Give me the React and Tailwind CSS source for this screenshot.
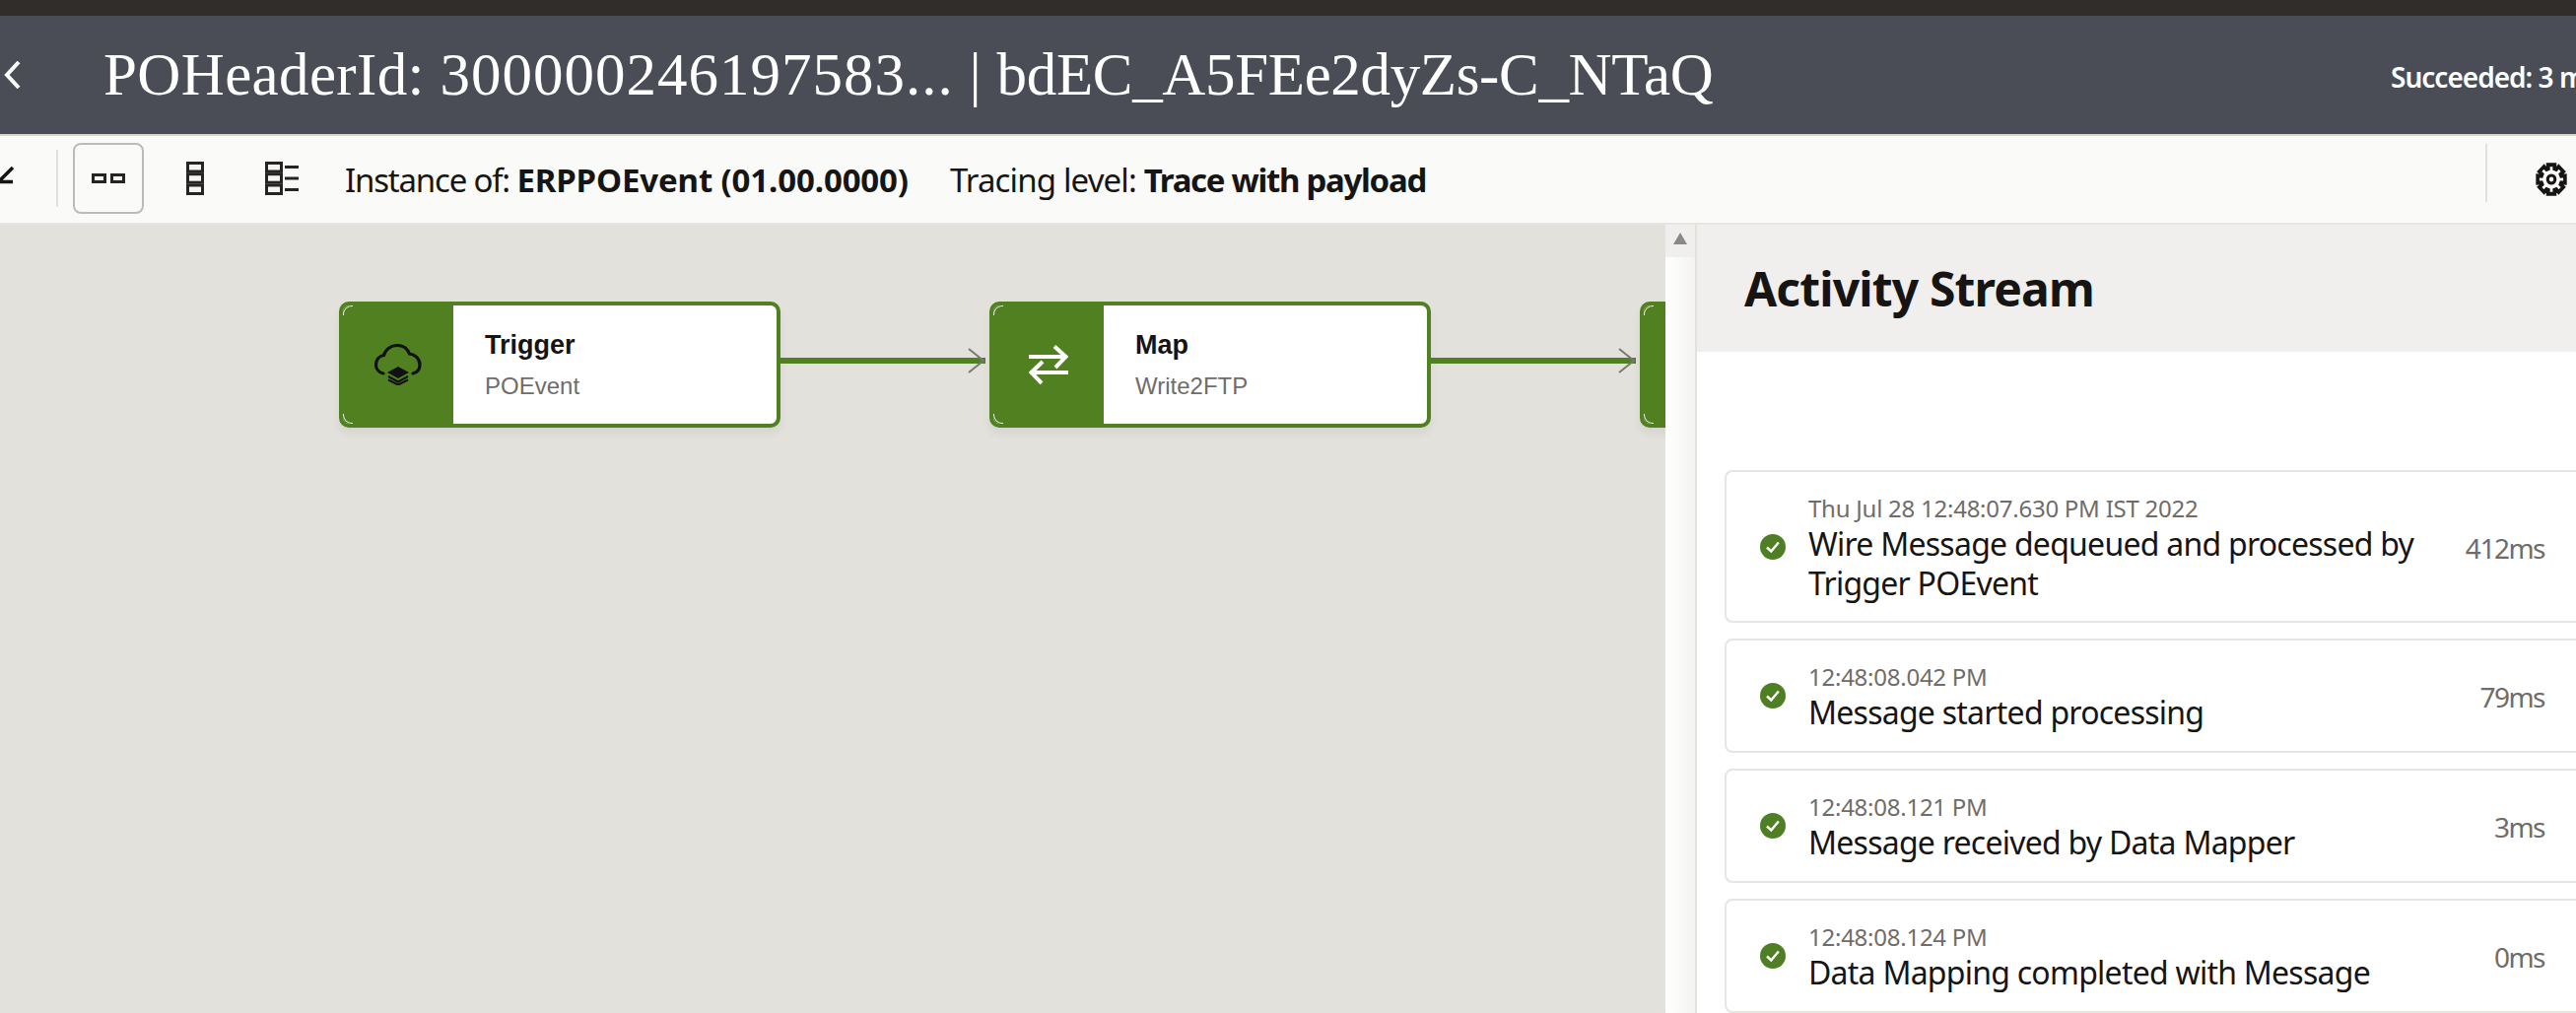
import React from "react";

const sans = "font-['Noto_Sans','Open_Sans',sans-serif]";

function Cloud() {
  return (
    <svg width="48" height="42" viewBox="0 0 48 42" fill="none">
      <path d="M9 30C4 29 1.500 25 1.500 21C1.500 16 5 12 9.500 11.500C11 5.500 17 1.500 23 1.500C29 1.500 33.500 5 35.500 10C41 10.500 46 15 46 21C46 25.500 43.500 29 39 30" stroke="#111" strokeWidth="3.200" strokeLinecap="round" />
      <path d="M24 23l11 6-11 6-11-6z" fill="#111" />
      <path d="M14 33l10 5.500 10-5.500M14 36.500l10 5 10-5" stroke="#111" strokeWidth="2" />
    </svg>
  );
}

function Swap() {
  return (
    <svg width="40" height="40" viewBox="0 0 40 40" fill="none" stroke="#fff" strokeWidth="4">
      <path d="M0 12H37M26 1.500L37.500 12L27 23" />
      <path d="M40 28H3M14 17L2.500 28L13 39" />
    </svg>
  );
}

function Check() {
  return (
    <svg width="26" height="26" viewBox="0 0 26 26" className="shrink-0">
      <circle cx="13" cy="13" r="13" fill="#4f7f24" />
      <path d="M7 13.500l4.300 4 7.500-9" fill="none" stroke="#fff" strokeWidth="2.400" />
    </svg>
  );
}

function gearPath() {
  const cx = 17, cy = 17, teeth = 8, outer = 15.2, inner = 11.2;
  const pts = [];
  for (let i = 0; i < teeth; i++) {
    const a = (i * 2 * Math.PI) / teeth - Math.PI / 2;
    const w = 0.24;
    const g = 0.3;
    pts.push([cx + inner * Math.cos(a - g), cy + inner * Math.sin(a - g)]);
    pts.push([cx + outer * Math.cos(a - w), cy + outer * Math.sin(a - w)]);
    pts.push([cx + outer * Math.cos(a + w), cy + outer * Math.sin(a + w)]);
    pts.push([cx + inner * Math.cos(a + g), cy + inner * Math.sin(a + g)]);
  }
  return "M" + pts.map((p) => p[0].toFixed(2) + " " + p[1].toFixed(2)).join("L") + "Z";
}

function Gear() {
  return (
    <svg width="32" height="34" viewBox="0 0 34 34" preserveAspectRatio="none" fill="none" stroke="#161513">
      <path d={gearPath()} strokeWidth="3.800" strokeLinejoin="miter" />
      <circle cx="17" cy="17" r="4" strokeWidth="3.200" />
    </svg>
  );
}

function Corners() {
  return (
    <>
      <span className="absolute left-0 top-0 w-[10px] h-[10px] border-l border-t border-white/90 rounded-tl-[9px]" />
      <span className="absolute left-0 bottom-0 w-[10px] h-[10px] border-l border-b border-white/90 rounded-bl-[9px]" />
    </>
  );
}

function Node({ icon, title, sub }) {
  return (
    <div className="relative flex shrink-0 w-[448px] h-[128px] rounded-[10px] border-4 border-[#50801f] bg-white shadow-[0_6px_10px_rgba(0,0,0,0.06)]">
      <div className="flex items-center justify-center w-[112px] h-full bg-[#50801f] rounded-l-[6px]">{icon}</div>
      <div className="flex flex-col pl-[32px] pt-[21px] font-['Liberation_Sans',sans-serif]">
        <div className="text-[27px] leading-[38px] font-bold text-[#161513]">{title}</div>
        <div className="text-[24px] leading-[34px] mt-[6px] text-[#6f6c69]">{sub}</div>
      </div>
      <Corners />
    </div>
  );
}

function Connector() {
  return (
    <div className="flex items-center shrink-0 w-[212px] h-[128px] pr-[4px] pb-[8px]">
      <div className="relative w-full h-[6px] bg-[#50801f]">
        <svg width="20" height="26" viewBox="0 0 20 26" className="absolute right-[-1px] top-[-10px]" fill="none" stroke="#7b7875" strokeWidth="2">
          <path d="M2 1l15 12L2 25" />
        </svg>
      </div>
    </div>
  );
}

function Card({ time, children, dur, tall }) {
  return (
    <div className={`flex items-center w-[900px] shrink-0 border-2 border-[#e6e5e2] rounded-[8px] pl-[34px] ${tall ? "h-[155px]" : "h-[116px]"}`}>
      <Check />
      <div className="w-[645px] ml-[23px] mr-[8px] pt-[3px] shrink-0">
        <div className="text-[24px] leading-[30px] text-[#6f6c69] tracking-[-0.25px]">{time}</div>
        <div className="text-[32px] leading-[40px] mt-[1px] text-[#161513] tracking-[-0.75px]">{children}</div>
      </div>
      <div className="w-[94px] pt-[2px] text-right text-[28px] text-[#6f6c69] tracking-[-1.5px]">{dur}</div>
    </div>
  );
}

export default function App() {
  return (
    <div className={`w-[2614px] h-[1028px] overflow-hidden flex flex-col bg-[#e2e1dc] ${sans}`}>
      <div className="h-[16px] shrink-0 bg-[#312d2a]" />
      <header className="relative flex items-center h-[120px] shrink-0 bg-[#4a4d56] text-white overflow-hidden">
        <svg width="20" height="32" viewBox="0 0 20 32" className="ml-[2px] shrink-0" fill="none" stroke="#fff" strokeWidth="4">
          <path d="M17 3L5 16l12 13" />
        </svg>
        <h1 className="ml-[83px] mb-[2px] text-[61px] font-['Liberation_Serif',serif] tracking-[0.37px] whitespace-nowrap leading-none">
          POHeaderId: <span className="tracking-[1px]">300000246197583...</span> | <span className="tracking-[-0.35px]">bdEC_A5FEe2dyZs-C_NTaQ</span>
        </h1>
        <div className="absolute left-[2426px] top-[41px] text-[28px] font-semibold whitespace-nowrap tracking-[-1px]">Succeeded: 3 m</div>
      </header>
      <div className="h-[2px] shrink-0 bg-[#d9d7cb]" />
      <div className="flex items-center h-[90px] shrink-0 pb-[2px] bg-[#fafaf8] border-b-2 border-[#e6e5e2] text-[#161513] relative">
        <svg width="14" height="18" viewBox="0 0 14 18" className="shrink-0 mb-[6px]" fill="none" stroke="#161513" strokeWidth="3.500">
          <path d="M13 1L-1 15M0 15.500h13" />
        </svg>
        <div className="ml-[43px] w-[2px] h-[58px] bg-[#e2e1dc]" />
        <div className="ml-[15px] flex items-center justify-center w-[72px] h-[72px] border-2 border-[#bdbbb7] rounded-[8px]">
          <svg width="34" height="10" viewBox="0 0 34 10" fill="#f4f4f2" stroke="#262422" strokeWidth="3"><rect x="1.500" y="1.500" width="12" height="7" /><rect x="20.500" y="1.500" width="12" height="7" /></svg>
        </div>
        <svg width="18" height="34" viewBox="0 0 18 34" className="ml-[43px]" fill="#f4f4f2" stroke="#262422" strokeWidth="3"><rect x="1.500" y="1.500" width="15" height="8.500" /><rect x="1.500" y="12.700" width="15" height="8.500" /><rect x="1.500" y="24" width="15" height="8.500" /></svg>
        <svg width="34" height="34" viewBox="0 0 34 34" className="ml-[62px]" fill="#f4f4f2" stroke="#262422" strokeWidth="3"><rect x="1.500" y="1.500" width="15" height="8.500" /><rect x="1.500" y="12.700" width="15" height="8.500" /><rect x="1.500" y="24" width="15" height="8.500" /><path d="M20 5.500h14M20 17h14M20 28.500h14" /></svg>
        <div className="ml-[47px] pt-[4px] text-[33px] whitespace-nowrap tracking-[-1.2px]">Instance of: <b className="font-bold tracking-[-0.13px]">ERPPOEvent (01.00.0000)</b></div>
        <div className="ml-[42px] pt-[4px] text-[33px] whitespace-nowrap tracking-[-0.85px]">Tracing level: <b className="font-bold tracking-[-1.3px]">Trace with payload</b></div>
        <div className="absolute left-[2522px] top-[8px] w-[2px] h-[59px] bg-[#e2e1dc]" />
        <div className="absolute left-[2573px] top-[27px]"><Gear /></div>
      </div>
      <div className="flex flex-1 min-h-0">
        <div className="flex items-start shrink-0 w-[1690px] overflow-hidden pl-[344px] pt-[78px]">
          <Node icon={<Cloud />} title="Trigger" sub="POEvent" />
          <Connector />
          <Node icon={<Swap />} title="Map" sub="Write2FTP" />
          <Connector />
          <Node icon={null} title="" sub="" />
        </div>
        <div className="w-[30px] shrink-0 bg-gradient-to-r from-white to-[#f3f3f1] flex flex-col">
          <div className="h-[33px] bg-[#f0efed] flex justify-center pt-[8px]">
            <svg width="14" height="12" viewBox="0 0 14 12"><path d="M7 0l7 12H0z" fill="#8b8986" /></svg>
          </div>
        </div>
        <div className="flex-1 min-w-0 bg-white border-l-2 border-[#e2e1dc] flex flex-col">
          <div className="flex items-center h-[129px] shrink-0 bg-[#f0efed] pl-[48px] text-[48px] font-bold text-[#161513] tracking-[-0.85px]">Activity Stream</div>
          <div className="flex flex-col gap-[16px] pl-[28px] pt-[120px]">
            <Card tall time="Thu Jul 28 12:48:07.630 PM IST 2022" dur="412ms">Wire Message dequeued and processed by Trigger POEvent</Card>
            <Card time="12:48:08.042 PM" dur="79ms">Message started processing</Card>
            <Card time="12:48:08.121 PM" dur="3ms">Message received by Data Mapper</Card>
            <Card time="12:48:08.124 PM" dur="0ms">Data Mapping completed with Message</Card>
          </div>
        </div>
      </div>
    </div>
  );
}
